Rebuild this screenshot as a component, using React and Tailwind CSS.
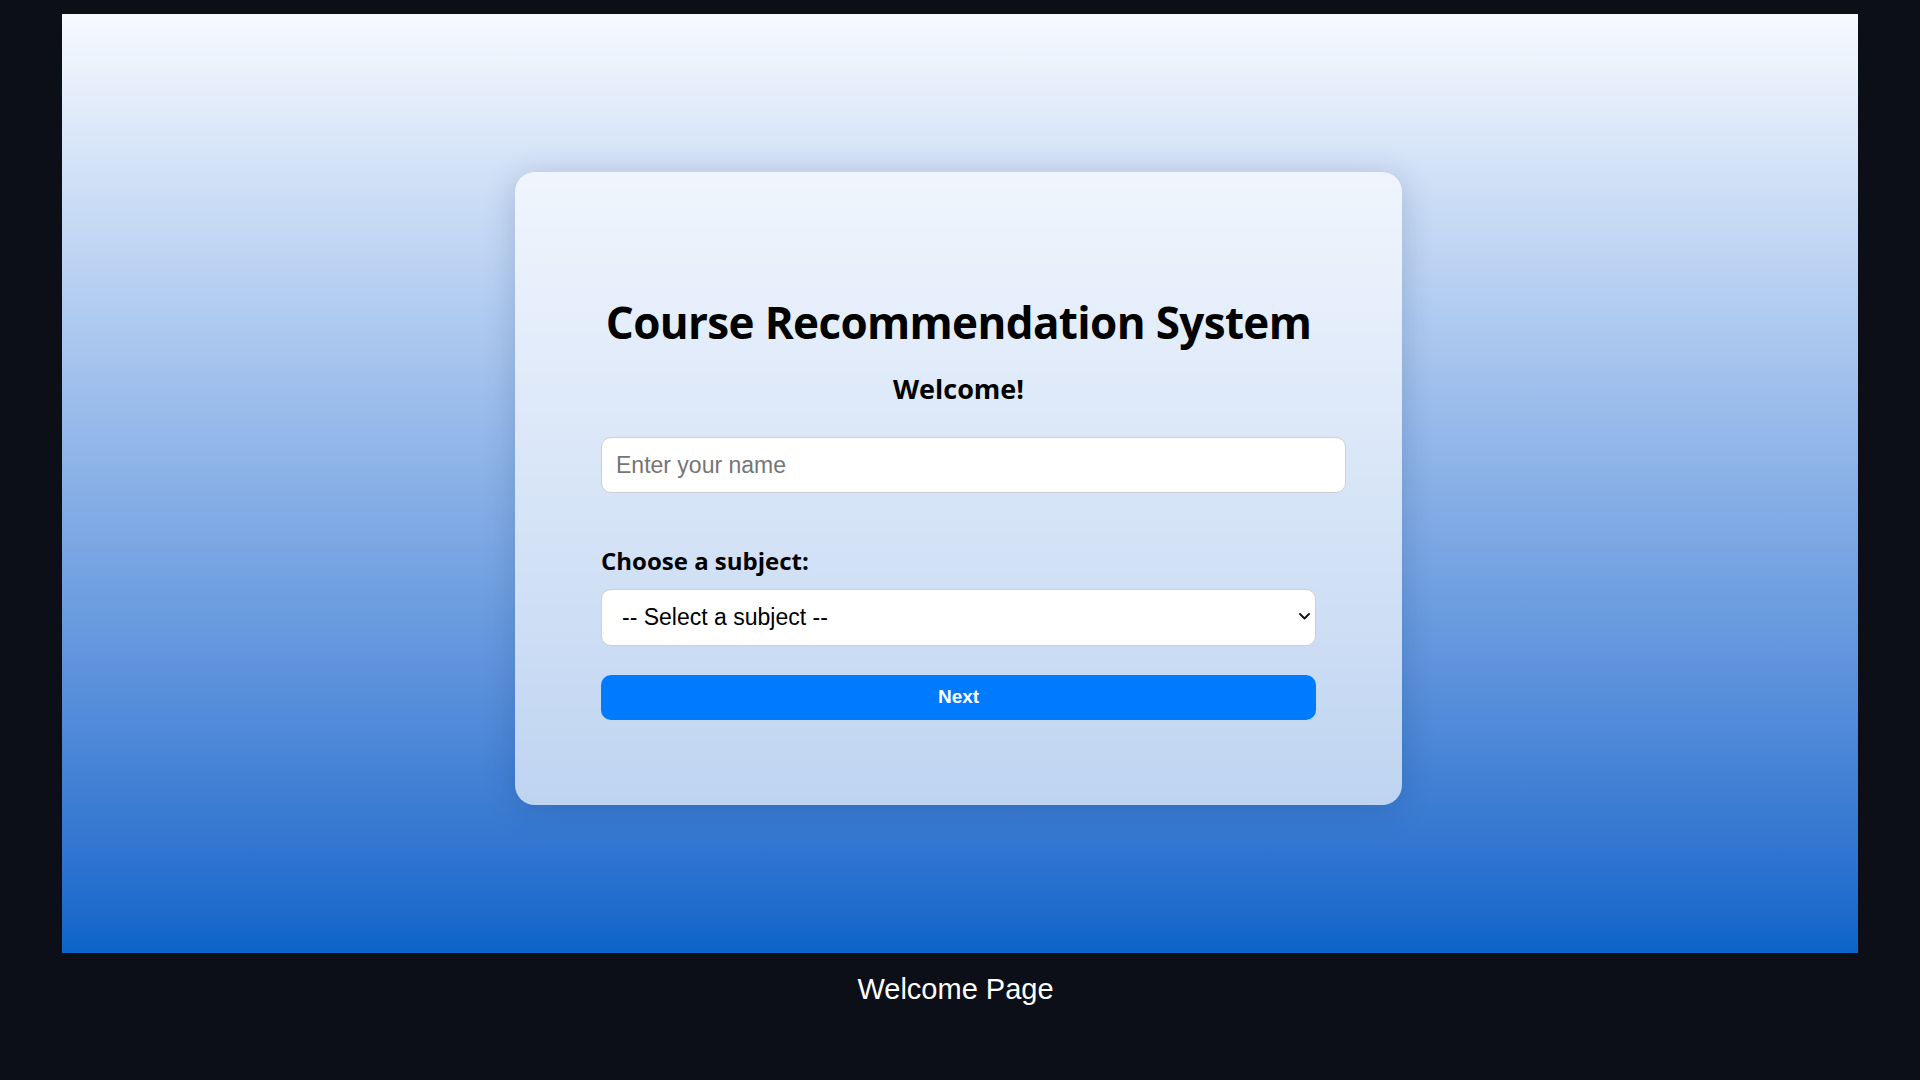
import React, { useState } from "react";

export default function App() {
  const [name, setName] = useState("");
  const [subject, setSubject] = useState("");

  return (
    <div className="w-full h-screen bg-[#0c0f17] flex flex-col items-center pt-[14px]">
      <div className="w-[1796px] h-[939px] bg-gradient-to-b from-[#f7fafe] to-[#0a64c9] flex justify-start pl-[453px] pt-[158px]">
        <div className="w-[887px] h-[633px] bg-white/[0.67] rounded-[20px] shadow-[0_4px_32px_rgba(10,40,90,0.2)] px-[86px] pt-[120px] flex flex-col items-start">
          <h1 className="w-full text-center text-[44px] font-bold tracking-[-0.65px] text-black font-['Open_Sans',sans-serif] leading-[60px]">
            Course Recommendation System
          </h1>
          <h2 className="w-full mt-[18px] text-center text-[27px] font-bold text-black font-['Open_Sans',sans-serif] leading-[37px]">
            Welcome!
          </h2>
          <input
            className="mt-[30px] w-[745px] h-[56px] shrink-0 px-[14px] rounded-[10px] border border-[#cfcfcf] bg-white text-[23px] text-black placeholder:text-[#757575] font-['Liberation_Sans',Arial,sans-serif] outline-none"
            placeholder="Enter your name"
            value={name}
            onChange={(e) => setName(e.target.value)}
          />
          <label className="mt-[51px] text-[24px] font-bold text-black font-['Open_Sans',sans-serif] leading-[33px]">
            Choose a subject:
          </label>
          <div className="relative mt-[12px] w-full h-[57px]">
            <select
              className="appearance-none w-full h-full pl-[20px] pr-10 rounded-[10px] border border-[#cfcfcf] bg-white text-[23px] text-black font-['Liberation_Sans',Arial,sans-serif] outline-none"
              value={subject}
              onChange={(e) => setSubject(e.target.value)}
            >
              <option value="">-- Select a subject --</option>
              <option value="math">Mathematics</option>
              <option value="cs">Computer Science</option>
              <option value="physics">Physics</option>
            </select>
            <svg className="absolute right-[6px] top-[24px] pointer-events-none" width="11" height="7" viewBox="0 0 11 7">
              <path d="M1 1l4.5 4.5L10 1" fill="none" stroke="#111" strokeWidth="1.8" strokeLinecap="round" strokeLinejoin="round" />
            </svg>
          </div>
          <button className="mt-[29px] w-full h-[45px] rounded-[10px] bg-[#007bff] text-white text-[19px] font-bold font-['Liberation_Sans',Arial,sans-serif]">
            Next
          </button>
        </div>
      </div>
      <div className="mt-[19px] mr-[9px] text-white text-[29px] leading-[35px] font-['Liberation_Sans',Arial,sans-serif]">
        Welcome Page
      </div>
    </div>
  );
}
